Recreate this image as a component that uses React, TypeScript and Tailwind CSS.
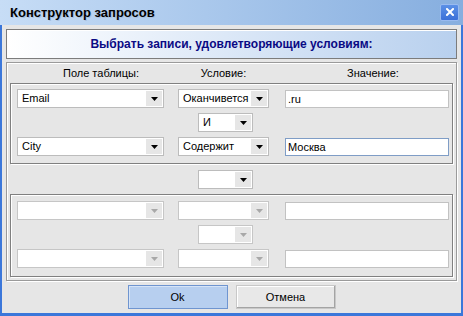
import React from "react";

const FONT = "font-['Liberation_Sans',Arial,sans-serif]";

function Arrow({ disabled }: { disabled?: boolean }) {
  return (
    <svg width="7" height="4" viewBox="0 0 7 4">
      <path d="M0 0h7L3.5 4z" fill={disabled ? "#a8a8a8" : "#000"} />
    </svg>
  );
}

function Combo({
  text,
  w,
  className = "",
  disabled,
}: {
  text?: string;
  w: string;
  className?: string;
  disabled?: boolean;
}) {
  return (
    <div
      className={`flex h-[19px] shrink-0 border bg-white ${
        disabled ? "border-[#c6c6c6]" : "border-[#bcbcbc]"
      } ${w} ${className}`}
    >
      <span className="flex-1 overflow-hidden whitespace-nowrap pl-[4px] text-[11px] leading-[17px] text-black">
        {text}
      </span>
      <span className="my-[1px] mr-[1px] flex w-[16px] shrink-0 items-center justify-center bg-[#e6e6e6]">
        <Arrow disabled={disabled} />
      </span>
    </div>
  );
}

function Field({
  value,
  className = "",
  focused,
}: {
  value?: string;
  className?: string;
  focused?: boolean;
}) {
  return (
    <div
      className={`h-[18px] w-[164px] shrink-0 border bg-white pl-[2px] text-[11px] leading-[16px] text-black ${
        focused ? "border-[#7f9dc6]" : "border-[#c2c2c2]"
      } ${className}`}
    >
      {value}
    </div>
  );
}

function Group({
  children,
  bottom,
}: {
  children: React.ReactNode;
  bottom: string;
}) {
  return (
    <div
      className={`ml-[3px] flex w-[443px] flex-col gap-[5px] border border-[#808080] pl-[6px] shadow-[inset_1px_1px_0_#fff,1px_1px_0_#fff] ${bottom}`}
    >
      {children}
    </div>
  );
}

export default function App() {
  return (
    <div className={`flex h-[316px] w-[463px] flex-col overflow-hidden ${FONT}`}>
      {/* title bar */}
      <div className="flex h-[25px] shrink-0 items-center bg-gradient-to-r from-[#c7ddf6] to-[#86aedf] pl-[10px] pr-[4px]">
        <span className="text-[13px] font-bold text-black [text-shadow:1px_1px_0_#a9c0dd]">
          Конструктор запросов
        </span>
        <div className="ml-auto mb-[1px] flex h-[17px] w-[19px] items-center justify-center rounded-[2px] border border-[#98baf0] bg-gradient-to-b from-[#5b90e6] to-[#3c70d8]">
          <svg width="8" height="8" viewBox="0 0 8 8">
            <path d="M1 1l6 6M7 1L1 7" stroke="#fff" strokeWidth="2" strokeLinecap="square" />
          </svg>
        </div>
      </div>

      {/* body */}
      <div className="flex flex-1 flex-col border-x-2 border-b-[3px] border-[#3b77da] bg-[#e6e6e6] px-[4px] pt-[4px]">
        <div className="flex h-[30px] items-center justify-center border border-[#7c7c7c] bg-gradient-to-r from-white to-[#b8d0ee] shadow-[inset_1px_1px_0_#fff]">
          <span className="text-[12px] font-bold text-[#0a0a84]">
            Выбрать записи, удовлетворяющие условиям:
          </span>
        </div>

        <div className="mt-[3px] flex flex-col border border-[#9a9a9a] pb-[3px] shadow-[inset_1px_1px_0_#fff,1px_1px_0_#fff]">
          <div className="flex h-[20px] items-center text-[11px] text-black">
            <div className="ml-[14px] w-[160px] text-center">Поле таблицы:</div>
            <div className="w-[85px] text-center">Условие:</div>
            <div className="ml-[32px] w-[150px] text-center">Значение:</div>
          </div>

          <Group bottom="pt-[5px] pb-[7px]">
            <div className="flex items-center">
              <Combo w="w-[147px]" text="Email" />
              <Combo w="w-[91px]" className="ml-[14px]" text="Оканчивется на" />
              <Field className="ml-[16px]" value=".ru" />
            </div>
            <div className="flex">
              <Combo w="w-[55px]" className="ml-[181px]" text="И" />
            </div>
            <div className="flex items-center">
              <Combo w="w-[147px]" text="City" />
              <Combo w="w-[91px]" className="ml-[14px]" text="Содержит" />
              <Field className="ml-[16px]" value="Москва" focused />
            </div>
          </Group>

          <div className="mt-[6px] mb-[5px] flex">
            <Combo w="w-[55px]" className="ml-[191px]" />
          </div>

          <Group bottom="pt-[6px] pb-[8px]">
            <div className="flex items-center">
              <Combo w="w-[147px]" disabled />
              <Combo w="w-[91px]" className="ml-[14px]" disabled />
              <Field className="ml-[16px]" />
            </div>
            <div className="flex">
              <Combo w="w-[55px]" className="ml-[181px]" disabled />
            </div>
            <div className="flex items-center">
              <Combo w="w-[147px]" disabled />
              <Combo w="w-[91px]" className="ml-[14px]" disabled />
              <Field className="ml-[16px]" />
            </div>
          </Group>
        </div>

        <div className="mt-[4px] flex justify-center gap-[8px]">
          <button className="h-[24px] w-[100px] border border-[#6f95d0] bg-[#b7cfef] text-[11px] text-black shadow-[inset_1px_1px_0_#d6e4f7]">
            Ok
          </button>
          <button className="h-[24px] w-[100px] border border-[#c8c8c8] bg-[#e8e8e8] text-[11px] text-black shadow-[inset_-1px_-1px_0_#a4a4a4,inset_1px_1px_0_#fff]">
            Отмена
          </button>
        </div>
      </div>
    </div>
  );
}
